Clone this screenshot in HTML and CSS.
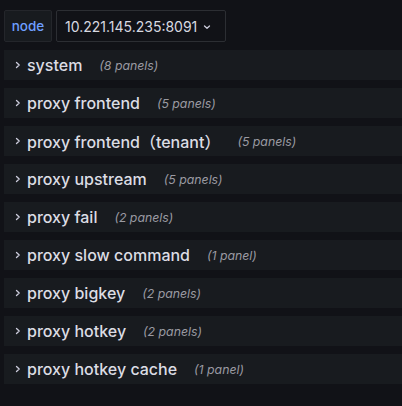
FILE: index.html
```html
<!DOCTYPE html>
<html>
<head>
<meta charset="utf-8">
<link rel="stylesheet" href="styles.css">
</head>
<body>
<div class="page">
  <div class="vars">
    <div class="var-label">node</div>
    <div class="var-select">
      <span class="value">10.221.145.235:8091</span>
      <svg class="caret" width="8" height="8" viewBox="0 0 8 8"><path d="M1.5 3 L4 5.3 L6.5 3" fill="none" stroke="#ccccdc" stroke-width="1.3" stroke-linecap="round" stroke-linejoin="round"/></svg>
    </div>
  </div>
  <div class="rows">
    <div class="row"><svg class="chev" width="6" height="10" viewBox="0 0 6 10"><path d="M1.5 2.5 L4.2 5 L1.5 7.5" fill="none" stroke="#ccccdc" stroke-width="1.3" stroke-linecap="round" stroke-linejoin="round"/></svg><span class="title">system</span><span class="count">(8 panels)</span></div>
    <div class="row"><svg class="chev" width="6" height="10" viewBox="0 0 6 10"><path d="M1.5 2.5 L4.2 5 L1.5 7.5" fill="none" stroke="#ccccdc" stroke-width="1.3" stroke-linecap="round" stroke-linejoin="round"/></svg><span class="title">proxy frontend</span><span class="count">(5 panels)</span></div>
    <div class="row"><svg class="chev" width="6" height="10" viewBox="0 0 6 10"><path d="M1.5 2.5 L4.2 5 L1.5 7.5" fill="none" stroke="#ccccdc" stroke-width="1.3" stroke-linecap="round" stroke-linejoin="round"/></svg><span class="title">proxy frontend（tenant）</span><span class="count">(5 panels)</span></div>
    <div class="row"><svg class="chev" width="6" height="10" viewBox="0 0 6 10"><path d="M1.5 2.5 L4.2 5 L1.5 7.5" fill="none" stroke="#ccccdc" stroke-width="1.3" stroke-linecap="round" stroke-linejoin="round"/></svg><span class="title">proxy upstream</span><span class="count">(5 panels)</span></div>
    <div class="row"><svg class="chev" width="6" height="10" viewBox="0 0 6 10"><path d="M1.5 2.5 L4.2 5 L1.5 7.5" fill="none" stroke="#ccccdc" stroke-width="1.3" stroke-linecap="round" stroke-linejoin="round"/></svg><span class="title">proxy fail</span><span class="count">(2 panels)</span></div>
    <div class="row"><svg class="chev" width="6" height="10" viewBox="0 0 6 10"><path d="M1.5 2.5 L4.2 5 L1.5 7.5" fill="none" stroke="#ccccdc" stroke-width="1.3" stroke-linecap="round" stroke-linejoin="round"/></svg><span class="title">proxy slow command</span><span class="count">(1 panel)</span></div>
    <div class="row"><svg class="chev" width="6" height="10" viewBox="0 0 6 10"><path d="M1.5 2.5 L4.2 5 L1.5 7.5" fill="none" stroke="#ccccdc" stroke-width="1.3" stroke-linecap="round" stroke-linejoin="round"/></svg><span class="title">proxy bigkey</span><span class="count">(2 panels)</span></div>
    <div class="row"><svg class="chev" width="6" height="10" viewBox="0 0 6 10"><path d="M1.5 2.5 L4.2 5 L1.5 7.5" fill="none" stroke="#ccccdc" stroke-width="1.3" stroke-linecap="round" stroke-linejoin="round"/></svg><span class="title">proxy hotkey</span><span class="count">(2 panels)</span></div>
    <div class="row"><svg class="chev" width="6" height="10" viewBox="0 0 6 10"><path d="M1.5 2.5 L4.2 5 L1.5 7.5" fill="none" stroke="#ccccdc" stroke-width="1.3" stroke-linecap="round" stroke-linejoin="round"/></svg><span class="title">proxy hotkey cache</span><span class="count">(1 panel)</span></div>
  </div>
</div>
</body>
</html>
```
FILE: styles.css
```css
html, body {
  margin: 0;
  padding: 0;
  background: #111217;
}
body {
  font-family: Inter, "Noto Sans CJK SC", sans-serif;
  color: #d8d9e0;
  width: 402px;
  height: 406px;
  overflow: hidden;
}
.page {
  padding: 10px 0 0 4px;
}
.vars {
  display: flex;
  gap: 4px;
  height: 32px;
}
.var-label {
  box-sizing: border-box;
  width: 48px;
  height: 32px;
  display: flex;
  align-items: center;
  justify-content: center;
  background: #181b1f;
  border: 1px solid #24262b;
  border-radius: 2px;
  color: #6e9fff;
  font-size: 13.5px;
  font-weight: 500;
}
.var-select {
  box-sizing: border-box;
  width: 170px;
  height: 32px;
  display: flex;
  align-items: center;
  padding-left: 8px;
  gap: 6px;
  background: #111217;
  border: 1px solid #2c2e33;
  border-radius: 2px;
  color: #d8d9e0;
  font-size: 14px;
}
.caret { margin-top: 1px; }
.rows {
  margin-top: 8px;
  display: flex;
  flex-direction: column;
  gap: 8px;
}
.row {
  height: 30px;
  background: #181b1f;
  display: flex;
  align-items: center;
  padding-left: 11px;
}
.chev {
  margin-right: 6px;
}
.title {
  font-size: 16px;
  font-weight: 500;
  color: #dcdde4;
}
.count {
  margin-left: 17px;
  font-size: 12.3px;
  font-style: italic;
  color: #9a9aa2;
}
```
